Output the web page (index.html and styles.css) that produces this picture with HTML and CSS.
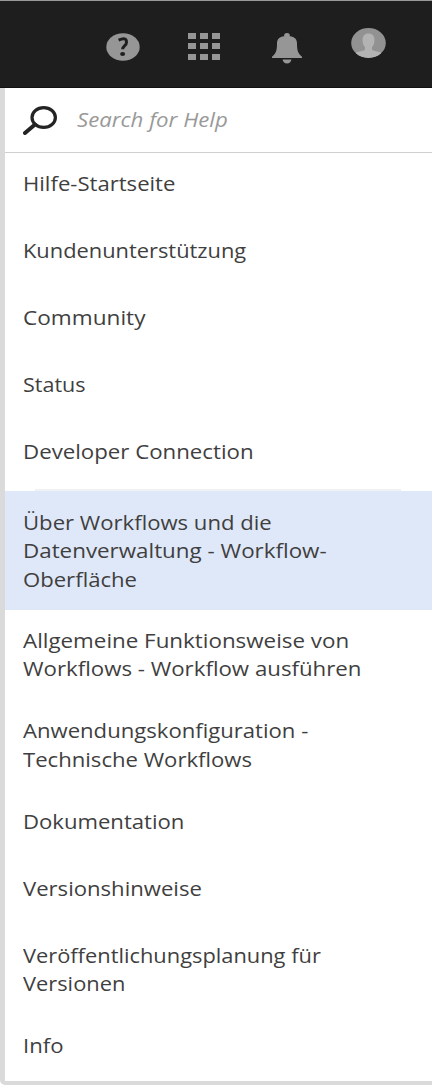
FILE: index.html
```html
<!DOCTYPE html>
<html lang="de">
<head>
<meta charset="utf-8">
<title>Hilfe</title>
<link rel="stylesheet" href="styles.css">
</head>
<body>
<header class="topbar">
  <svg class="icon-help" viewBox="0 0 34 28" width="34" height="28"><ellipse cx="17" cy="14" rx="16.7" ry="13.8" fill="#969696"/><path d="M12.600 7.200Q20.500 3.500 20.500 9.200C20.500 13 16.600 12.700 16.600 16.300" fill="none" stroke="#1e1e1e" stroke-width="3"/><ellipse cx="16.600" cy="21" rx="2.500" ry="2.100" fill="#1e1e1e"/></svg>
  <svg class="icon-apps" viewBox="0 0 32 27" width="32" height="27" fill="#969696"><path d="M0 0h8v6H0zM12 0h8v6h-8zM24 0h8v6h-8zM0 10h8v6H0zM12 10h8v6h-8zM24 10h8v6h-8zM0 21h8v6H0zM12 21h8v6h-8zM24 21h8v6h-8z"/></svg>
  <svg class="icon-bell" viewBox="0 0 30 31" width="30" height="31" fill="#969696"><path d="M15 0c2.300 0 3.200 1.400 2.800 3.200 5 .8 7.200 3 7.200 7.300 0 7 1 10 5 13.200V25H0v-1.300c4-3.200 5-6.200 5-13.200 0-4.300 2.200-6.500 7.200-7.300C11.800 1.400 12.700 0 15 0zM10.500 26.500h9Q18.500 30.500 15 30.500T10.500 26.500z"/></svg>
  <svg class="icon-user" viewBox="0 0 35 30" width="35" height="30"><defs><clipPath id="disc"><ellipse cx="17.500" cy="15" rx="17.300" ry="14.900"/></clipPath></defs><g clip-path="url(#disc)"><path fill="#929292" d="M0 0h35v30H0z"/><path fill="#b3b3b3" d="M17.500 5.500c4 0 6 2.700 6 6.800 0 3-1 5-2.500 7v2.200c1.500 2 8 1.500 11 4.500v5H3v-5c3-3 9.500-2.500 11-4.500v-2.200c-1.500-2-2.500-4-2.500-7 0-4.100 2-6.800 6-6.800z"/></g></svg>
</header>
<main class="panel">
  <div class="search">
    <svg class="icon-search" viewBox="0 0 34 29" width="34" height="29" fill="none" stroke="#242424"><ellipse cx="20.700" cy="11.500" rx="11.700" ry="9.800" stroke-width="3.200"/><path d="M12 18.500L2 27" stroke-width="4" stroke-linecap="round"/></svg>
    <span class="placeholder">Search for Help</span>
  </div>
  <nav class="menu">
    <a class="item"><span class="line w110">Hilfe-Startseite</span></a>
    <a class="item"><span class="line w109">Kundenunterstützung</span></a>
    <a class="item"><span class="line w113">Community</span></a>
    <a class="item"><span class="line w108">Status</span></a>
    <a class="item"><span class="line w111">Developer Connection</span></a>
    <div class="rule"></div>
    <a class="item active"><span class="line w110">Über Workflows und die</span><span class="line w112">Datenverwaltung - Workflow-</span><span class="line w110">Oberfläche</span></a>
    <a class="item"><span class="line w112">Allgemeine Funktionsweise von</span><span class="line w111">Workflows - Workflow ausführen</span></a>
    <a class="item"><span class="line w110">Anwendungskonfiguration -</span><span class="line w110">Technische Workflows</span></a>
    <a class="item"><span class="line w110">Dokumentation</span></a>
    <a class="item"><span class="line w110">Versionshinweise</span></a>
    <a class="item"><span class="line w109">Veröffentlichungsplanung für</span><span class="line w109">Versionen</span></a>
    <a class="item"><span class="line w110">Info</span></a>
  </nav>
</main>
</body>
</html>
```
FILE: styles.css
```css
* { box-sizing: border-box; }
body { margin: 0; background: #fff; color: #3f3f3f; font-family: "Open Sans", sans-serif; overflow-x: hidden; }
.topbar { display: flex; align-items: flex-start; height: 88px; background: #1e1e1e; border-top: 1px solid #999; border-bottom: 1px solid #111; padding-left: 106px; }
.icon-help { margin-top: 32px; }
.icon-apps { margin: 32px 0 0 48px; }
.icon-bell { margin: 32px 0 0 51.7px; }
.icon-user { margin: 27px 0 0 49px; }
.panel { height: 997px; border-left: 5px solid #dadada; border-bottom: 4px solid #dadada; border-bottom-left-radius: 5px; }
.search { display: flex; align-items: center; height: 65px; border-bottom: 1px solid #d0d0d0; padding-left: 18px; }
.placeholder { margin-left: 20px; padding-bottom: 2px; color: #999; font-size: 20px; font-style: italic; font-weight: 500; white-space: nowrap; transform: scaleX(1.11); transform-origin: left; }
.item { display: block; min-height: 67px; padding: 17px 18px; font-size: 20px; line-height: 28.250px; white-space: nowrap; }
.line { display: block; width: max-content; transform-origin: left; }
.w108 { transform: scaleX(1.075); }
.w109 { transform: scaleX(1.092); }
.w110 { transform: scaleX(1.105); }
.w111 { transform: scaleX(1.112); }
.w112 { transform: scaleX(1.118); }
.w113 { transform: scaleX(1.13); }
.rule { height: 3px; margin: 0 31px 0 30px; border-bottom: 2px solid #f1f1f1; }
.active { padding: 18px 18px 16px; background: #dfe8f8; }
```
